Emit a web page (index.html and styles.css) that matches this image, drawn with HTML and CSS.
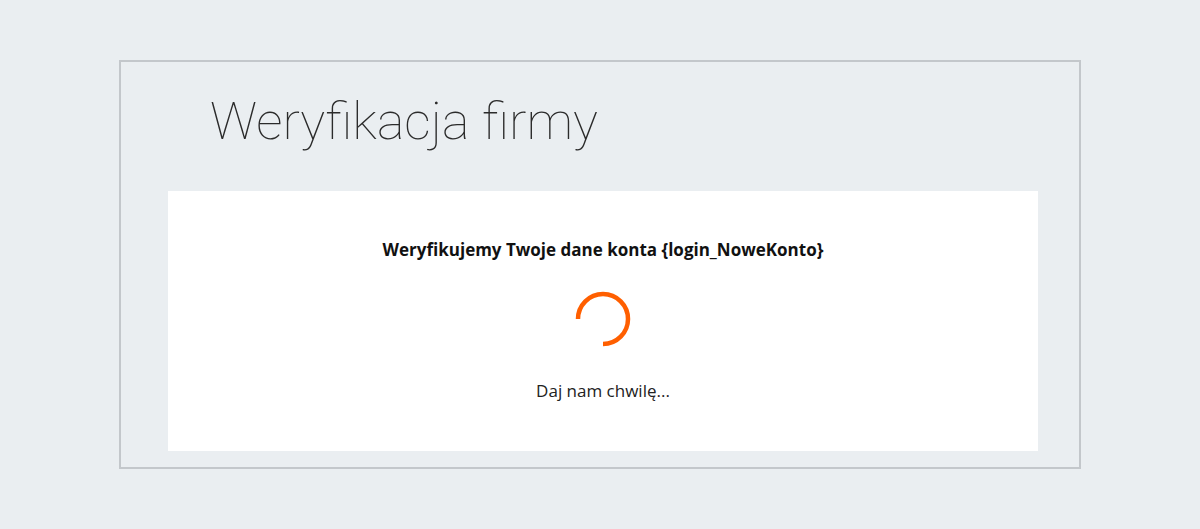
FILE: index.html
```html
<!DOCTYPE html>
<html lang="pl">
<head>
    <meta charset="UTF-8">
    <meta name="viewport" content="width=device-width, initial-scale=1.0">
    <title>Weryfikacja firmy</title>
    <link rel="stylesheet" href="styles.css">
</head>
<body>
    <div class="frame">
        <h1 class="title">Weryfikacja firmy</h1>
        <div class="panel">
            <p class="lead">Weryfikujemy Twoje dane konta {login_NoweKonto}</p>
            <svg class="spinner" width="58" height="58" viewBox="0 0 58 58">
                <path d="M4 29 A25 25 0 1 1 29 54" fill="none" stroke="#ff5f00" stroke-width="4.5"/>
            </svg>
            <p class="wait">Daj nam chwilę...</p>
        </div>
    </div>
</body>
</html>
```

FILE: styles.css
```css
body {
    margin: 0;
    padding-top: 60px;
    background-color: #eaeef1;
    font-family: "Open Sans", Arial, sans-serif;
}

.frame {
    box-sizing: border-box;
    width: 962px;
    height: 409px;
    margin: 0 auto;
    padding: 0 43px 0 47px;
    border: 2px solid #c3c7cb;
}

.title {
    margin: 0;
    padding: 22px 0 0 42px;
    height: 129px;
    box-sizing: border-box;
    font-family: Roboto, sans-serif;
    font-weight: 100;
    font-size: 52px;
    line-height: 76px;
    color: #2b2b2b;
}

.panel {
    width: 870px;
    height: 260px;
    background-color: #fff;
    display: flex;
    flex-direction: column;
    align-items: center;
    box-sizing: border-box;
    padding-top: 47px;
}

.lead {
    margin: 0;
    font-size: 17px;
    font-weight: 700;
    line-height: 24px;
    color: #111;
}

.spinner {
    margin-top: 28px;
}

.wait {
    margin: 31px 0 0;
    font-size: 17px;
    line-height: 24px;
    color: #222;
}
```
